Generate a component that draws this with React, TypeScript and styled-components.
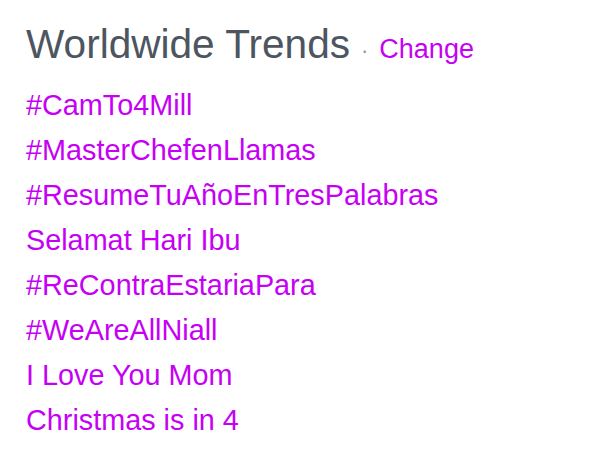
import React from "react";
import styled, { createGlobalStyle } from "styled-components";

const Global = createGlobalStyle`
  html, body { margin: 0; padding: 0; background: #ffffff; }
  body { font-family: "Liberation Sans", Arial, sans-serif; }
`;

const Panel = styled.section`
  width: 600px;
  height: 450px;
  box-sizing: border-box;
  padding: 22px 0 0 26px;
  background: #ffffff;
`;

const Header = styled.h2`
  margin: 0;
  display: flex;
  align-items: baseline;
  gap: 11px;
  font-weight: normal;
  line-height: 44px;
`;

const Title = styled.span`
  font-size: 40.6px;
  color: #4c5560;
`;

const Dot = styled.span`
  font-size: 22px;
  color: #8a96a0;
`;

const ChangeLink = styled.a`
  font-size: 27px;
  color: #c600f5;
  text-decoration: none;
`;

const List = styled.ul`
  list-style: none;
  margin: 10px 0 0;
  padding: 0;
`;

const Item = styled.li`
  font-size: 28.8px;
  line-height: 45px;
`;

const TrendLink = styled.a`
  color: #c600f5;
  text-decoration: none;
`;

const trends = [
  "#CamTo4Mill",
  "#MasterChefenLlamas",
  "#ResumeTuAñoEnTresPalabras",
  "Selamat Hari Ibu",
  "#ReContraEstariaPara",
  "#WeAreAllNiall",
  "I Love You Mom",
  "Christmas is in 4",
];

export default function App() {
  return (
    <>
      <Global />
      <Panel>
        <Header>
          <Title>Worldwide Trends</Title>
          <Dot>·</Dot>
          <ChangeLink href="#">Change</ChangeLink>
        </Header>
        <List>
          {trends.map((t) => (
            <Item key={t}>
              <TrendLink href="#">{t}</TrendLink>
            </Item>
          ))}
        </List>
      </Panel>
    </>
  );
}
